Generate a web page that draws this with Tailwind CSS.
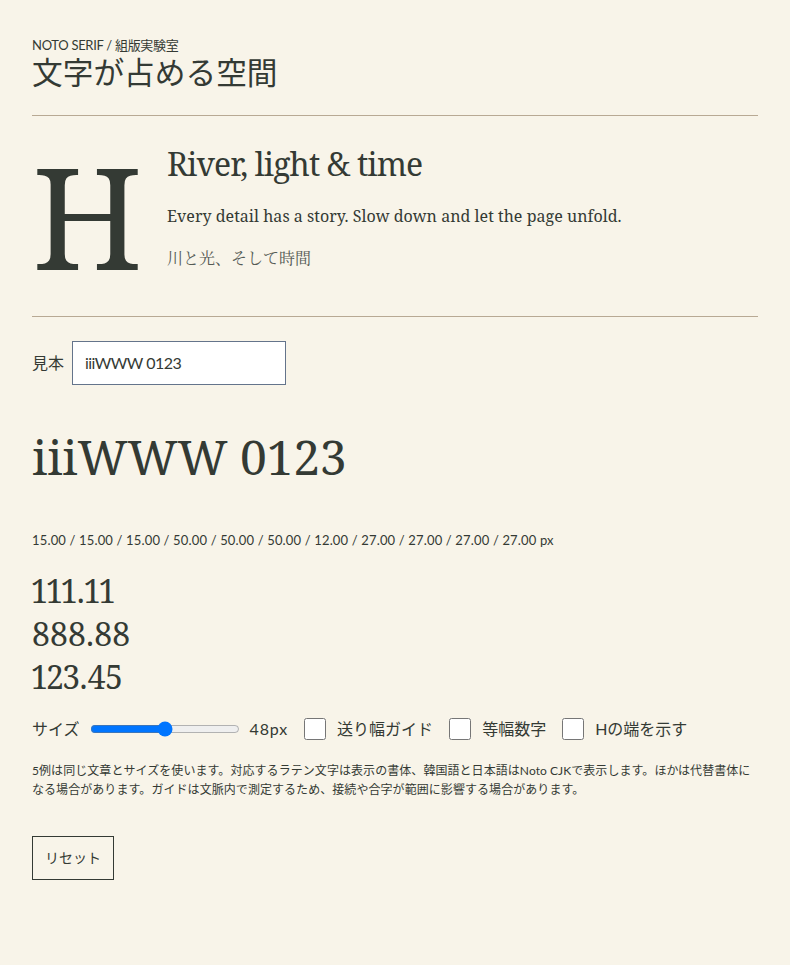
<!DOCTYPE html>
<html lang="ja"><head><meta charset="utf-8"><script src="https://cdn.jsdelivr.net/npm/@tailwindcss/browser@4"></script></head>
<body class="bg-[#f8f4e9] text-[#343a34] font-['Lato','Noto_Sans_CJK_JP',sans-serif]">
<main class="px-8 pt-[37px]">
<header class="border-b border-[#b8a994] h-[79px]">
<p class="text-[13px] leading-4 tracking-[-0.3px]">NOTO SERIF / 組版実験室</p>
<h1 class="text-[30.7px] leading-9 font-normal font-['Noto_Sans_CJK_JP',sans-serif]">文字が占める空間</h1>
</header>
<section class="flex gap-6 items-start border-b border-[#b8a994] h-[201px] font-['Noto_Serif','Noto_Serif_CJK_JP','Noto_Sans_CJK_JP',serif]">
<div class="text-[140px] leading-[200px] w-[111px]">H</div>
<div class="pt-6"><h2 class="text-[32px] leading-[48px] tracking-[-0.9px]">River, light &amp; time</h2><p class="mt-4 text-base leading-6 tracking-[0.03px]">Every detail has a story. Slow down and let the page unfold.</p><p class="mt-[18px] text-base leading-6 text-[#555b55]">川と光、そして時間</p></div>
</section>
<div class="flex items-center gap-2 mt-6 text-base"><label for="s">見本</label><input id="s" value="iiiWWW 0123" class="w-[214px] h-11 border border-[#64748b] bg-white px-3 pb-0.5 text-[#343a34] tracking-[-0.55px]"></div>
<p class="mt-9 text-5xl leading-[72px] tracking-[-0.2px] font-['Noto_Serif',serif]">iiiWWW 0123</p>
<p class="mt-[37px] text-[13px] leading-5 tracking-[0.16px]">15.00 / 15.00 / 15.00 / 50.00 / 50.00 / 50.00 / 12.00 / 27.00 / 27.00 / 27.00 / 27.00 px</p>
<div class="mt-[19px] text-[32px] leading-[43px] tracking-[0.2px] proportional-nums font-['Noto_Serif',serif]"><div>111.11</div><div>888.88</div><div>123.45</div></div>
<div class="flex items-center gap-4 mt-[19px] h-6">
<label class="flex items-center gap-[10px]"><span>サイズ</span><input type="range" class="w-[150px] m-0"><span class="tracking-[0.85px]">48px</span></label>
<label class="flex items-center gap-[11px]"><input type="checkbox" class="size-[22px] m-0"><span>送り幅ガイド</span></label>
<label class="flex items-center gap-[11px]"><input type="checkbox" class="size-[22px] m-0"><span>等幅数字</span></label>
<label class="flex items-center gap-[11px]"><input type="checkbox" class="size-[22px] m-0"><span>Hの端を示す</span></label>
</div>
<p class="mt-5 text-xs leading-[19px] tracking-[0.06px]">5例は同じ文章とサイズを使います。対応するラテン文字は表示の書体、韓国語と日本語はNoto CJKで表示します。ほかは代替書体になる場合があります。ガイドは文脈内で測定するため、接続や合字が範囲に影響する場合があります。</p>
<button class="block mt-[37px] border border-[#343a34] w-[82px] h-11 text-sm">リセット</button>
</main>
</body></html>
